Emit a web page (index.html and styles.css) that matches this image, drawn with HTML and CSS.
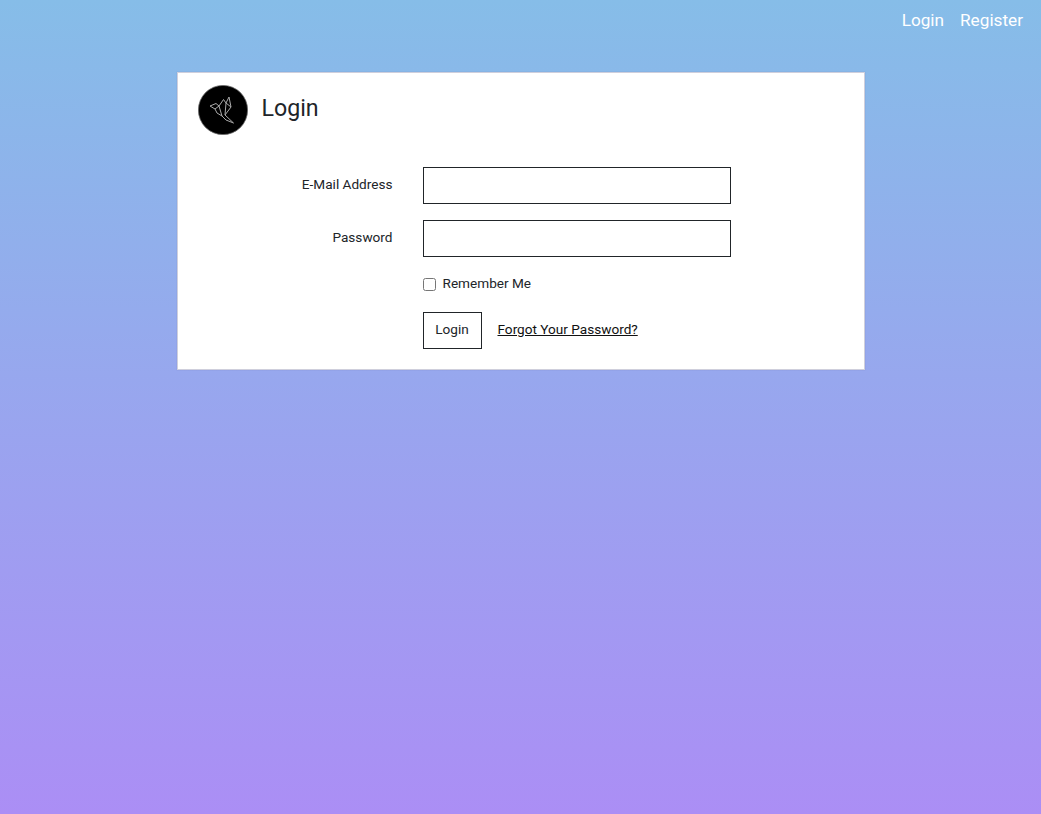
FILE: index.html
```html
<!DOCTYPE html>
<html lang="en">
<head>
  <meta charset="UTF-8">
  <title>Login</title>
  <link rel="stylesheet" href="styles.css">
</head>
<body>
  <nav class="topnav">
    <a href="#">Login</a>
    <a href="#">Register</a>
  </nav>

  <div class="card">
    <div class="card-header">
      <svg class="logo" width="50" height="50" viewBox="0 0 50 50">
        <circle cx="25" cy="25" r="24.6" fill="#000" stroke="#666" stroke-width="0.8"/>
        <g fill="none" stroke="#aaa" stroke-width="1" stroke-linejoin="round">
          <path d="M12 21l6-2.500 3 2.500 4.500-6.500 2.500 3.500 3-6 2 10-6 8 8.500 8-7.500-3-4-4-5-3-2-4z"/>
          <path d="M21 21l-4 3M21 21l3 10M28 18l-1 12M33 22l-5-4"/>
        </g>
      </svg>
      <h1>Login</h1>
    </div>

    <form class="login-form">
      <label class="field-label" for="email">E-Mail Address</label>
      <input class="field-input" type="email" id="email">

      <label class="field-label" for="password">Password</label>
      <input class="field-input" type="password" id="password">

      <label class="remember">
        <input type="checkbox">
        <span>Remember Me</span>
      </label>

      <div class="actions">
        <button type="submit">Login</button>
        <a href="#">Forgot Your Password?</a>
      </div>
    </form>
  </div>
</body>
</html>
```

FILE: styles.css
```css
html, body {
  height: 100%;
}
body {
  margin: 0;
  font-family: Roboto, "Liberation Sans", sans-serif;
  font-size: 13.6px;
  color: #212529;
  background: linear-gradient(to bottom, #86bde8, #ab8ef5);
  overflow: hidden;
}
.topnav {
  display: flex;
  justify-content: flex-end;
  gap: 16px;
  height: 72px;
  box-sizing: border-box;
  padding: 10px 18px 0 0;
}
.topnav a {
  color: #fff;
  font-size: 17.2px;
  line-height: 21px;
  text-decoration: none;
}
.card {
  width: 688px;
  height: 298px;
  box-sizing: border-box;
  margin: 0 auto;
  background: #fff;
  border: 1px solid #cfcfdc;
  box-shadow: 0 0 1px rgba(80, 80, 140, 0.3);
}
.card-header {
  display: flex;
  align-items: center;
  gap: 14px;
  padding: 12px 0 0 20px;
}
.logo {
  display: block;
}
.card-header h1 {
  margin: 0;
  padding-bottom: 4px;
  font-size: 23.2px;
  font-weight: 400;
  line-height: 30px;
  color: #212529;
}
.login-form {
  display: grid;
  grid-template-columns: 215px 308px;
  column-gap: 30px;
  row-gap: 16px;
  align-items: center;
  margin-top: 32px;
}
.field-label {
  padding-bottom: 3px;
  text-align: right;
}
.field-input {
  height: 37px;
  box-sizing: border-box;
  border: 1px solid #212529;
  background: #fff;
  padding: 6px 12px;
  border-radius: 0;
}
.remember {
  grid-column: 2;
  display: flex;
  align-items: center;
  gap: 7px;
  height: 21px;
  margin-top: 1px;
}
.remember input {
  width: 13px;
  height: 13px;
  margin: 0;
}
.remember span {
  padding-bottom: 3px;
}
.actions {
  grid-column: 2;
  display: flex;
  align-items: center;
  gap: 16px;
  margin-top: 1px;
}
.actions button {
  width: 59px;
  height: 37px;
  padding: 0 0 3px;
  background: #fff;
  border: 1px solid #212529;
  font: inherit;
  color: #212529;
}
.actions a {
  padding-bottom: 3px;
  color: #111;
}
```
